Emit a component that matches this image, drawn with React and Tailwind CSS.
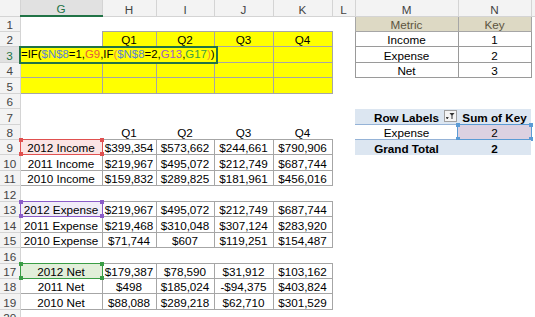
import React from 'react';

const COLS = [
  { id: 'G', w: 'w-[82px]' },
  { id: 'H', w: 'w-[54px]' },
  { id: 'I', w: 'w-[58px]' },
  { id: 'J', w: 'w-[59px]' },
  { id: 'K', w: 'w-[59px]' },
  { id: 'L', w: 'w-[23px]' },
  { id: 'M', w: 'w-[103px]' },
  { id: 'N', w: 'w-[73px]' },
  { id: 'O', w: 'w-[30px]', hideLabel: true },
];

const BOX = 'border border-[#a6a6a6]';
const YELLOW = 'bg-[#ffff00] border border-[#a6a6a6]';
const META_HEAD = 'bg-[#ddd9c4] text-[#5c5440] border border-[#a6a6a6]';
const META = 'border border-[#9a9a9a]';
const PIV_HEAD = 'bg-[#dce6f1] font-bold border-b border-[#95b3d7]';
const PIV_TOTAL = 'bg-[#dce6f1] font-bold border-t border-[#95b3d7]';

const SEL = {
  red: { line: 'border-[#e0504f]', dot: 'bg-[#e0504f]' },
  purple: { line: 'border-[#8b5cc8]', dot: 'bg-[#8b5cc8]' },
  green: { line: 'border-[#3a9d45]', dot: 'bg-[#3a9d45]' },
  blue: { line: 'border-[#5b9bd5]', dot: 'bg-[#5b9bd5]' },
};

const quarters = (cls) => ({
  H: { t: 'Q1', c: cls },
  I: { t: 'Q2', c: cls },
  J: { t: 'Q3', c: cls },
  K: { t: 'Q4', c: cls },
});

const dataRow = (label, vals, first) => ({
  G: first ? { t: label, c: `${BOX} ${first.fill}`, sel: first.tone } : { t: label, c: BOX },
  H: { t: vals[0], c: BOX },
  I: { t: vals[1], c: BOX },
  J: { t: vals[2], c: BOX },
  K: { t: vals[3], c: BOX },
});

const grid = {
  1: { M: { t: 'Metric', c: META_HEAD }, N: { t: 'Key', c: META_HEAD } },
  2: { ...quarters(YELLOW), M: { t: 'Income', c: META }, N: { t: '1', c: META } },
  3: {
    G: { c: YELLOW, edit: true },
    H: { c: YELLOW },
    I: { c: YELLOW },
    J: { c: YELLOW },
    K: { c: YELLOW },
    M: { t: 'Expense', c: META },
    N: { t: '2', c: META },
  },
  4: {
    G: { c: YELLOW },
    H: { c: YELLOW },
    I: { c: YELLOW },
    J: { c: YELLOW },
    K: { c: YELLOW },
    M: { t: 'Net', c: META },
    N: { t: '3', c: META },
  },
  5: { G: { c: YELLOW }, H: { c: YELLOW }, I: { c: YELLOW }, J: { c: YELLOW }, K: { c: YELLOW } },
  7: { M: { t: 'Row Labels', c: PIV_HEAD, filter: true }, N: { t: 'Sum of Key', c: PIV_HEAD } },
  8: { ...quarters(''), M: { t: 'Expense' }, N: { t: '2', c: 'bg-[#dcd1e1]', sel: 'blue' } },
  9: {
    ...dataRow('2012 Income', ['$399,354', '$573,662', '$244,661', '$790,906'], { fill: 'bg-[#fbe4e4]', tone: 'red' }),
    M: { t: 'Grand Total', c: PIV_TOTAL },
    N: { t: '2', c: PIV_TOTAL },
  },
  10: dataRow('2011 Income', ['$219,967', '$495,072', '$212,749', '$687,744']),
  11: dataRow('2010 Income', ['$159,832', '$289,825', '$181,961', '$456,016']),
  13: dataRow('2012 Expense', ['$219,967', '$495,072', '$212,749', '$687,744'], { fill: 'bg-[#f1ecf8]', tone: 'purple' }),
  14: dataRow('2011 Expense', ['$219,468', '$310,048', '$307,124', '$283,920']),
  15: dataRow('2010 Expense', ['$71,744', '$607', '$119,251', '$154,487']),
  17: dataRow('2012 Net', ['$179,387', '$78,590', '$31,912', '$103,162'], { fill: 'bg-[#e2efda]', tone: 'green' }),
  18: dataRow('2011 Net', ['$498', '$185,024', '-$94,375', '$403,824']),
  19: dataRow('2010 Net', ['$88,088', '$289,218', '$62,710', '$301,529']),
};

const ROWS = Array.from({ length: 20 }, (_, i) => i + 1);

function Selection({ tone }) {
  const s = SEL[tone];
  const corners = ['-left-[2px] -top-[2px]', '-right-[2px] -top-[2px]', '-left-[2px] -bottom-[2px]', '-right-[2px] -bottom-[2px]'];
  return (
    <span className={`pointer-events-none absolute -inset-px border ${s.line}`}>
      {corners.map((p) => (
        <span key={p} className={`absolute h-[4px] w-[4px] ${p} ${s.dot}`} />
      ))}
    </span>
  );
}

function FilterButton() {
  return (
    <svg className="absolute right-[1px] top-[1px]" width="13" height="12" viewBox="0 0 13 12">
      <rect x="0.5" y="0.5" width="12" height="11" fill="#f4f4f4" stroke="#a0a0a0" />
      <path d="M2 7.5h2.5" stroke="#444" strokeWidth="1" />
      <path d="M2.5 8.5h1.5" stroke="#444" strokeWidth="1" />
      <path d="M5.5 3h5l-2 2.5v3.5h-1v-3.5z" fill="#333" />
    </svg>
  );
}

function Formula() {
  return (
    <div className="absolute -left-[2px] -top-[1.5px] z-10 h-[18px] w-[199px] border-2 border-[#217346] bg-[#ffff00] text-left text-[11.4px] leading-[13px] text-black whitespace-nowrap">
      =IF(<span className="text-[#5b84d0]">$N$8</span>=1,<span className="text-[#e45c3c]">G9</span>,IF
      <span className="text-[#f08a3c]">(</span>
      <span className="text-[#5b84d0]">$N$8</span>=2,<span className="text-[#a060c0]">G13</span>,
      <span className="text-[#3a9d45]">G17</span>
      <span className="text-[#f08a3c]">)</span>)
    </div>
  );
}

export default function App() {
  return (
    <div className="h-[317px] w-[535px] overflow-hidden bg-white">
      <table className="w-[561px] table-fixed border-collapse font-['Liberation_Sans',Arial,sans-serif] text-[11.7px] text-black">
        <colgroup>
          <col className="w-[20px]" />
          {COLS.map((col) => (
            <col key={col.id} className={col.w} />
          ))}
        </colgroup>
        <thead>
          <tr className="h-[16px]">
            <th className="border-b border-r border-[#d4d4d4] bg-[#f3f3f3]" />
            {COLS.map((col) => (
              <th
                key={col.id}
                className={
                  col.id === 'G'
                    ? 'border-r border-[#d4d4d4] border-b-2 border-b-[#217346] bg-[#e1e1e1] align-bottom font-normal leading-[13px] text-[#217346]'
                    : 'border-b border-r border-[#d4d4d4] bg-[#f3f3f3] align-bottom font-normal leading-[13px] text-[#444]'
                }
              >
                {col.hideLabel ? '' : col.id}
              </th>
            ))}
          </tr>
        </thead>
        <tbody>
          {ROWS.map((r) => (
            <tr key={r} className="h-[15.45px]">
              <td
                className={
                  r === 3
                    ? 'border-b border-[#d4d4d4] border-r-2 border-r-[#217346] bg-[#e1e1e1] text-center align-bottom leading-[13px] text-[#217346]'
                    : 'border-b border-r border-[#d4d4d4] bg-[#f3f3f3] text-center align-bottom leading-[13px] text-[#444]'
                }
              >
                {r}
              </td>
              {COLS.map((col) => {
                const cell = (grid[r] || {})[col.id] || {};
                return (
                  <td
                    key={col.id}
                    className={`relative overflow-visible whitespace-nowrap text-center align-bottom leading-[13px] ${cell.c || ''}`}
                  >
                    {cell.edit && <Formula />}
                    {cell.t}
                    {cell.filter && <FilterButton />}
                    {cell.sel && <Selection tone={cell.sel} />}
                  </td>
                );
              })}
            </tr>
          ))}
        </tbody>
      </table>
    </div>
  );
}
